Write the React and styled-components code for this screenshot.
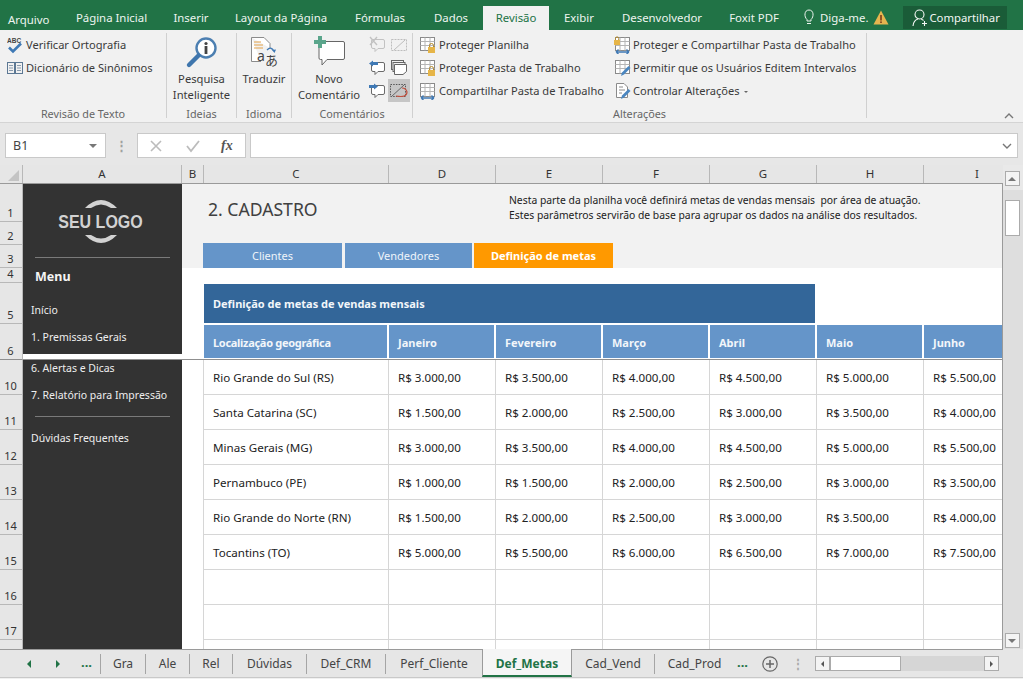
import React from "react";
import styled, { createGlobalStyle } from "styled-components";

const UI = `"Noto Sans", "Open Sans", "Liberation Sans", sans-serif`;

const Global = createGlobalStyle`
  html, body { margin: 0; padding: 0; background: #fff; }
  * { box-sizing: border-box; }
`;

const Page = styled.div`
  width: 1023px; height: 679px; overflow: hidden;
  display: flex; flex-direction: column;
  font-family: ${UI}; font-size: 12px; color: #333; background: #f0f0f0;
`;

/* ---------- title tabs ---------- */
const TopBar = styled.div`
  height: 30px; flex: none; display: flex; align-items: flex-end;
  background: #217346; color: #eef5f0;
`;
const TopTab = styled.div`
  width: ${p => p.$w}px; height: 24px; display: flex; align-items: center;
  justify-content: ${p => (p.$left ? "flex-start" : "center")};
  padding-left: ${p => (p.$left ? "8px" : "0")};
  padding-top: ${p => (p.$left ? "2px" : "0")};
  padding-bottom: ${p => (p.$left ? "0" : "1px")};
  font-size: 11.4px;
  background: ${p => (p.$active ? "#f1f1f1" : "transparent")};
  color: ${p => (p.$active ? "#217346" : "inherit")};
`;
const TellMe = styled.div`
  display: flex; align-items: center; height: 24px; margin-left: 10px; gap: 5px;
  font-size: 11.4px; padding-bottom: 1px;
`;
const ShareBtn = styled.div`
  margin: 0 0 1px 14px; width: 104px; height: 23px; background: #1a5c38;
  display: flex; align-items: center; gap: 0; padding-left: 9px; font-size: 11.3px; color: #f3f7f4;
`;

/* ---------- ribbon ---------- */
const Ribbon = styled.div`
  height: 93px; flex: none; display: flex; background: #f1f1f1; border-bottom: 1px solid #d4d4d4; padding-top: 3px;
`;
const Group = styled.div`
  width: ${p => p.$w}px; height: 85px; display: flex; flex-direction: column;
  border-right: 1px solid #d0d0d0;
`;
const GroupBody = styled.div`
  flex: 1; min-height: 0; display: flex; padding-left: ${p => p.$pl || 0}px;
`;
const GroupLabel = styled.div`
  height: 16px; margin-bottom: -4px; line-height: 16px; text-align: center; font-size: 10.8px; color: #666;
`;
const Stack = styled.div`
  width: ${p => (p.$w ? p.$w + "px" : "auto")}; display: flex; flex-direction: column;
`;
const SmallItem = styled.div`
  height: 23px; display: flex; align-items: center; gap: ${p => p.$gap ?? 3}px; font-size: 11.1px; color: #3a3a3a; white-space: nowrap;
  svg { flex: none; }
`;
const LargeBtn = styled.div`
  width: ${p => p.$w}px; flex: none; display: flex; flex-direction: column; align-items: center;
  padding-top: 3px; font-size: 11.2px; line-height: 16px; color: #3a3a3a; text-align: center;
  svg { flex: none; margin-bottom: 2px; }
`;
const MiniGrid = styled.div`
  display: grid; grid-template-columns: 22px 22px; grid-auto-rows: 23px;
`;
const MiniCell = styled.div`
  display: flex; align-items: center; justify-content: center;
  background: ${p => (p.$on ? "#c6c6c6" : "transparent")};
`;
const Caret = styled.span`
  display: inline-block; width: 0; height: 0; margin: 0 0 2px 4px; border: 2.5px solid transparent;
  border-top-color: #666; border-bottom: 0;
`;
const Collapse = styled.div`
  margin-left: auto; align-self: flex-end; margin-right: 9px; margin-bottom: 3px; line-height: 0;
`;

/* ---------- formula bar ---------- */
const FormulaBar = styled.div`
  height: 42px; flex: none; display: flex; background: #e7e7e7; padding: 10px 5px 7px;
`;
const NameBox = styled.div`
  width: 101px; background: #fff; border: 1px solid #c9c9c9; display: flex; align-items: center;
  justify-content: space-between; padding: 0 8px 0 7px; font-size: 12.5px; color: #444;
`;
const Dots = styled.div`
  width: 31px; display: flex; align-items: center; justify-content: center;
  color: #a0a0a0; font-size: 13px; font-weight: 700; line-height: 1;
`;
const FxBox = styled.div`
  width: 109px; background: #fff; border: 1px solid #c9c9c9; display: flex; align-items: center; padding: 0 0 0 10px;
  svg { flex: none; }
`;
const FxText = styled.span`
  margin-left: 20px; font-family: "Liberation Serif", serif; font-style: italic; font-weight: 700; font-size: 14px; color: #555;
`;
const FormulaInput = styled.div`
  flex: 1; margin-left: 4px; background: #fff; border: 1px solid #c9c9c9; display: flex; align-items: center;
  justify-content: flex-end; padding-right: 5px;
`;

/* ---------- sheet frame ---------- */
const Body = styled.div`
  flex: none; height: 484px; display: flex;
`;
const SheetColumn = styled.div`
  width: 1003px; flex: none; display: flex; flex-direction: column;
`;
const ColHeaders = styled.div`
  height: 19px; flex: none; display: flex; background: #e6e6e6; border-bottom: 1px solid #9a9a9a; overflow: hidden;
`;
const Corner = styled.div`
  width: 23px; flex: none; border-right: 1px solid #b8b8b8; display: flex; align-items: flex-end; justify-content: flex-end; padding: 0 3px 2px 0;
`;
const ColHead = styled.div`
  width: ${p => p.$w}px; flex: none; text-align: center; line-height: 18px; font-size: 11.5px; color: #333;
  border-right: 1px solid #b8b8b8;
`;
const SheetArea = styled.div`
  flex: 1; min-height: 0; display: flex;
`;
const RowHeaders = styled.div`
  width: 23px; flex: none; display: flex; flex-direction: column; background: #e6e6e6; overflow: hidden;
`;
const RowHead = styled.div`
  height: ${p => p.$h}px; flex: none; display: flex; align-items: flex-end; justify-content: center;
  width: 23px; padding-right: 1px;
  border-bottom: 1px solid ${p => (p.$freeze ? "#8f8f8f" : "#b8b8b8")};
  border-right: 1px solid #b8b8b8;
  font-size: 11px; line-height: 17px; color: #333;
`;
const Canvas = styled.div`
  flex: 1; min-width: 0; display: flex; flex-direction: column; background: #fff;
  border-right: 1px solid #9a9a9a; overflow: hidden;
`;
const TopPane = styled.div`
  height: 176px; flex: none; display: flex; border-bottom: 1px solid #8f8f8f;
`;
const LowerPane = styled.div`
  flex: 1; min-height: 0; display: flex;
`;

/* ---------- dark side menu ---------- */
const Sidebar = styled.div`
  width: 159px; flex: none; background: #333333; color: #f0f0f0;
  height: ${p => (p.$h ? p.$h + "px" : "auto")};
  padding-top: ${p => p.$pt || 0}px; overflow: hidden;
`;
const Logo = styled.div`
  display: flex; flex-direction: column; align-items: center; padding-right: 4px;
  svg { display: block; }
`;
const LogoText = styled.div`
  font-family: "Liberation Sans", sans-serif; font-weight: 700; font-size: 18px; line-height: 20px;
  color: #d2d2d2; margin: 4px 0 3px; white-space: nowrap; transform: scaleX(0.89);
`;
const SideRule = styled.div`
  height: 1px; background: #7a7a7a; margin: ${p => p.$mt}px 12px ${p => p.$mb}px;
`;
const MenuTitle = styled.div`
  padding-left: 12px; font-weight: 700; font-size: 12.5px; line-height: 16px; color: #f4f4f4; margin-bottom: 17px;
`;
const MenuItem = styled.div`
  padding-left: 8px; font-size: 10.5px; line-height: 16px; margin-bottom: ${p => p.$mb ?? 11}px; color: #eeeeee; white-space: nowrap;
`;

/* ---------- header band ---------- */
const MainPane = styled.div`
  flex: 1; min-width: 0; display: flex; flex-direction: column;
`;
const Band = styled.div`
  height: 84px; flex: none; background: #f2f2f2; display: flex; flex-direction: column;
`;
const BandTop = styled.div`
  height: 59px; flex: none; display: flex; padding-left: 26px;
`;
const PageTitle = styled.div`
  width: 301px; flex: none; font-size: 17.6px; color: #404040; line-height: 24px; padding-top: 13px;
`;
const Description = styled.div`
  padding-top: 9px; font-size: 10.35px; line-height: 15px; color: #222; white-space: pre;
`;
const SubTabs = styled.div`
  height: 25px; flex: none; display: flex; padding-left: 21px;
`;
const SubTab = styled.div`
  width: ${p => p.$w}px; margin-right: ${p => p.$mr || 0}px; display: flex; align-items: center; justify-content: center;
  background: ${p => (p.$active ? "#ff9900" : "#6595c9")}; color: ${p => (p.$active ? "#fff" : "#eef4fa")};
  font-size: 11px; font-weight: ${p => (p.$active ? 700 : 400)};
`;
const TableTitle = styled.div`
  width: 611px; height: 39px; flex: none; margin: 16px 0 2px 22px; background: #336699; color: #f2f6fa;
  display: flex; align-items: center; padding-left: 9px; font-size: 11px; font-weight: 700;
`;
const HeadRow = styled.div`
  display: grid; grid-template-columns: 185px repeat(6, 107px); margin-left: 21px;
`;
const HeadCell = styled.div`
  height: 33px; margin: 0 1px; background: #6595c9; color: #f2f6fa; display: flex; align-items: center;
  padding: 1px 0 0 9px; font-size: 11px; font-weight: 700; white-space: nowrap;
  letter-spacing: ${p => p.$ls || 0}px;
`;

/* ---------- data table ---------- */
const Spacer = styled.div`
  width: 21px; flex: none;
`;
const DataGrid = styled.div`
  display: grid; grid-template-columns: 185px repeat(6, 107px); grid-auto-rows: 35px; align-content: start;
`;
const DataCell = styled.div`
  border-left: 1px solid #d6d6d6; border-bottom: 1px solid #d6d6d6; display: flex; align-items: center;
  padding-left: 9px; font-size: 11.6px; color: #222; white-space: nowrap; overflow: hidden;
`;

/* ---------- scrollbars ---------- */
const VScroll = styled.div`
  flex: 1; display: flex; flex-direction: column; align-items: center; background: #dedede; padding: 6px 2px 1px 0;
  position: relative;
`;
const ScrollHeadFill = styled.div`
  position: absolute; left: 0; right: 0; top: 0; height: 25px; background: #e9e9e9;
`;
const ScrollBtn = styled.div`
  position: relative; width: 15px; height: 15px; flex: none; background: #f4f4f4; border: 1px solid #ababab;
  display: flex; align-items: center; justify-content: center;
`;
const VThumb = styled.div`
  position: relative; width: 15px; height: 36px; flex: none; margin-top: 14px; background: #fff; border: 1px solid #ababab;
`;
const Arrow = styled.span`
  width: 0; height: 0; border: ${p => p.$s || 4}px solid transparent;
  ${p => `border-${p.$dir}-color: ${p.$c || "#777"}; border-${{ top: "bottom", bottom: "top", left: "right", right: "left" }[p.$dir]}-width: 0;`}
`;
const Grow = styled.div`
  flex: 1;
`;

/* ---------- sheet tabs ---------- */
const SheetBar = styled.div`
  height: 29px; flex: none; display: flex; background: #e6e6e6; border-bottom: 1px solid #c9c9c9;
`;
const SheetBarMain = styled.div`
  width: 1003px; flex: none; display: flex; align-items: stretch; border-top: 1px solid #9a9a9a;
`;
const TabNav = styled.div`
  width: 101px; flex: none; align-self: center; height: 20px; border-right: 1px solid #a5a5a5;
  display: flex; align-items: center; padding-left: 27px; gap: 25px;
`;
const NavDots = styled.span`
  font-weight: 700; color: #217346; font-size: 13px; line-height: 10px; margin-left: -4px; padding-bottom: 4px;
`;
const SheetTab = styled.div`
  width: ${p => p.$w}px; flex: none; display: flex; align-items: center; justify-content: center;
  font-size: 12px; white-space: nowrap;
  ${p => p.$active
    ? `margin-top: -1px; background: #f5f5f5; border-left: 1px solid #9a9a9a; border-right: 1px solid #9a9a9a; border-bottom: 2px solid #217346; color: #217346; font-weight: 700; padding-top: 3px;`
    : `align-self: center; height: 20px; color: #444; border-right: ${p.$plain ? "0" : "1px solid #a5a5a5"};`}
`;
const MoreDots = styled.span`
  font-weight: 700; color: #217346; font-size: 13px; line-height: 10px; margin-left: -4px; padding-bottom: 4px; align-self: center; width: 25px; text-align: center;
`;
const AddSheet = styled.div`
  align-self: center; margin-left: 7px; line-height: 0;
`;
const BarDots = styled.span`
  align-self: center; color: #aaa; font-weight: 700; font-size: 12px; width: 22px; margin-left: 9px; text-align: center; line-height: 1;
`;
const HScroll = styled.div`
  align-self: center; margin-left: 6px; width: 184px; height: 15px; display: flex; background: #d6d6d6;
`;
const HThumb = styled.div`
  width: 71px; background: #fff; border: 1px solid #ababab;
`;

/* ---------- icons ---------- */
const SpellIcon = () => (
  <svg width="16" height="18" viewBox="0 0 16 18">
    <text x="0" y="7" fontFamily="Liberation Sans, sans-serif" fontSize="6.5" fontWeight="700" fill="#444">ABC</text>
    <path d="M2 11.5 L6 15.5 L14 7.5" fill="none" stroke="#3f79b5" strokeWidth="2.6" />
  </svg>
);
const BookIcon = () => (
  <svg width="16" height="16" viewBox="0 0 16 16" fill="none" stroke="#5c7894">
    <rect x=".5" y="2.5" width="7" height="11" />
    <rect x="8.5" y="2.5" width="7" height="11" />
    <path d="M2 5.5h4M2 8h4M2 10.5h4M10 5.5h4M10 8h4M10 10.5h4" stroke="#8a9bad" />
  </svg>
);
const SearchIcon = () => (
  <svg width="34" height="33" viewBox="0 0 34 33">
    <circle cx="21" cy="12" r="9.5" fill="#fff" stroke="#4c7fb1" strokeWidth="2.4" />
    <circle cx="21" cy="7.5" r="1.6" fill="#444" />
    <rect x="19.6" y="10" width="2.8" height="8" fill="#444" />
    <path d="M13.5 19.5 L4 29" stroke="#3f76ad" strokeWidth="4.4" strokeLinecap="round" />
  </svg>
);
const TranslateIcon = () => (
  <svg width="32" height="33" viewBox="0 0 32 33">
    <path d="M3.5 1.5 H16 L22 7.5 V12 M13 25.5 H3.5 V1.5" fill="#fff" stroke="#8b8b8b" />
    <path d="M6 6h7M6 9h9M6 12h9" stroke="#e3a24a" />
    <text x="9" y="25" fontFamily="Noto Sans, sans-serif" fontSize="14" fill="#444">a</text>
    <text x="17" y="29" fontFamily="Noto Sans CJK JP, sans-serif" fontSize="13" fill="#444">あ</text>
    <path d="M19 14 Q23 10 26 15" fill="none" stroke="#3f79b5" strokeWidth="1.3" />
    <path d="M24 14 L26.5 17 L28 13.5" fill="#3f79b5" />
  </svg>
);
const NewCommentIcon = () => (
  <svg width="34" height="33" viewBox="0 0 34 33">
    <path d="M8.5 5.5 H31 Q32.5 5.5 32.5 7 V22 Q32.5 23.5 31 23.5 H15 L10 29 V23.5 H8.5 Q7 23.5 7 22 V7 Q7 5.5 8.5 5.5 Z" fill="#fff" stroke="#666" strokeLinejoin="round" />
    <path d="M6 0 H10 V4 H14 V8 H10 V12 H6 V8 H2 V4 H6 Z" fill="#5aa58b" />
  </svg>
);
const Bubble = ({ faded, arrow, cross }) => (
  <svg width="17" height="17" viewBox="0 0 17 17">
    <path d="M4 3.5 H14 Q15.5 3.5 15.5 5 V11 Q15.5 12.5 14 12.5 H9 L6 15.5 V12.5 H4 Q2.5 12.5 2.5 11 V5 Q2.5 3.5 4 3.5 Z" fill={faded ? "none" : "#fff"} stroke={faded ? "#c2c2c2" : "#6a6a6a"} />
    {arrow === "left" && <path d="M0 4.5 L4 1.5 V3 H9 V6 H4 V7.5 Z" fill="#3f79b5" />}
    {arrow === "right" && <path d="M9 4.5 L5 1.5 V3 H0 V6 H5 V7.5 Z" fill="#3f79b5" />}
    {cross && <path d="M1 1 L8 9 M8 1 L1 9" stroke="#c2c2c2" strokeWidth="1.4" />}
  </svg>
);
const EditNote = () => (
  <svg width="17" height="14" viewBox="0 0 17 14" fill="none" stroke="#bdbdbd">
    <rect x=".5" y="1.5" width="15" height="11" strokeDasharray="2 1" />
    <path d="M3 12 L14 2" />
  </svg>
);
const AllNotes = () => (
  <svg width="16" height="16" viewBox="0 0 16 16" fill="#f1f1f1" stroke="#666">
    <rect x=".5" y=".5" width="12" height="9" />
    <rect x="2" y="2.5" width="12" height="9" />
    <path d="M3.5 4.5 H15.5 V11.5 L12 14.5 H3.5 Z" fill="#fff" />
  </svg>
);
const InkNote = () => (
  <svg width="18" height="16" viewBox="0 0 18 16" fill="none">
    <rect x=".5" y="1.5" width="15" height="12" stroke="#555" strokeDasharray="1.5 1.2" />
    <path d="M1 14 L14 2" stroke="#666" />
    <path d="M6 13 Q17 15 17 9 Q16 5 12 5" stroke="#c0503f" strokeWidth="1.2" />
  </svg>
);
const SheetIcon = ({ lock, share, pen, top, doc }) => (
  <svg width="17" height="18" viewBox="0 0 17 18" fill="none">
    {doc ? (
      <path d="M2.5 1.5 H10 L13.5 5 V15.5 H2.5 Z M5 5h4M5 8h6M5 11h3" stroke="#8a8a8a" fill="#fff" />
    ) : (
      <>
        <rect x="1.5" y="1.5" width="14" height="13" fill="#fff" stroke="#8a8a8a" />
        <path d="M1.5 5.5h14M1.5 9.5h14M6 1.5v13M11 1.5v13" stroke="#b5b5b5" />
      </>
    )}
    {lock && (
      <>
        <path d="M10.5 11 V9.5 a2 2 0 0 1 4 0 V11" stroke="#b58a2c" />
        <rect x="9" y="11" width="7" height="6" fill="#e6b548" />
      </>
    )}
    {top && (
      <>
        <path d="M1.5 4 V2.5 a1.6 1.6 0 0 1 3.2 0 V4" stroke="#b58a2c" />
        <rect x="0" y="4" width="6" height="5" fill="#e6b548" />
      </>
    )}
    {share && <path d="M2 16 H15 M2 16 L4.5 13.5 M2 16 L4.5 18 M15 16 L12.5 13.5 M15 16 L12.5 18" stroke="#3f79b5" strokeWidth="1.4" />}
    {pen && <path d="M7 17 L8 13.5 L14.5 7 L16.5 9 L10 15.5 Z" fill="#4a86c0" />}
  </svg>
);
const Lamp = () => (
  <svg width="12" height="17" viewBox="0 0 12 17" fill="none" stroke="#eef5f0">
    <path d="M4 10.5 C1 8 1 1 6 1 C11 1 11 8 8 10.5 V12 H4 Z" />
    <path d="M4 14.5h4" />
  </svg>
);
const Warn = () => (
  <svg width="16" height="15" viewBox="0 0 16 15">
    <path d="M8 .5 L15.5 14.5 H.5 Z" fill="#e6b54f" />
    <rect x="7.2" y="5" width="1.6" height="5.5" fill="#7a3b1c" />
    <rect x="7.2" y="11.4" width="1.6" height="1.6" fill="#7a3b1c" />
  </svg>
);
const ShareUser = () => (
  <svg width="17" height="18" viewBox="0 0 17 18" fill="none" stroke="#f3f7f4" strokeWidth="1.1">
    <circle cx="7.5" cy="5.5" r="4.5" />
    <path d="M1 17 C1.5 12 4 10.5 6 10 M9 10 C10 10.3 11 11 11.5 11.5" />
    <path d="M12.5 12v5M10 14.5h5" />
  </svg>
);
const CloseMark = () => (
  <svg width="16" height="14" viewBox="0 0 16 14" stroke="#bcbcbc" strokeWidth="1.6" fill="none">
    <path d="M3 2 L13 12 M13 2 L3 12" />
  </svg>
);
const CheckMark = () => (
  <svg width="16" height="14" viewBox="0 0 16 14" stroke="#bcbcbc" strokeWidth="1.8" fill="none" style={{ marginLeft: 21 }}>
    <path d="M2 7 L6 12 L14 2" />
  </svg>
);
const Chevron = ({ up }) => (
  <svg width="10" height="6" viewBox="0 0 10 6" fill="none" stroke="#777" strokeWidth="1.4">
    <path d={up ? "M1 5 L5 1 L9 5" : "M1 1 L5 5 L9 1"} />
  </svg>
);
const Arc = ({ flip }) => (
  <svg width="32" height="11" viewBox="0 0 32 11" style={flip ? { transform: "scaleY(-1)" } : undefined}>
    <path d="M0 11 Q16 -5 32 11 L26 11 Q16 4 6 11 Z" fill="#d2d2d2" />
  </svg>
);
const PlusCircle = () => (
  <svg width="16" height="16" viewBox="0 0 16 16" fill="none" stroke="#666" strokeWidth="1.2">
    <circle cx="8" cy="8" r="7.2" />
    <path d="M8 4v8M4 8h8" strokeWidth="1.5" />
  </svg>
);
const CornerMark = () => (
  <svg width="11" height="11" viewBox="0 0 11 11"><path d="M11 0 V11 H0 Z" fill="#c4c4c4" /></svg>
);

/* ---------- data ---------- */
const topTabs = [
  ["Arquivo", 62, true], ["Página Inicial", 99], ["Inserir", 60], ["Layout da Página", 120],
  ["Fórmulas", 78], ["Dados", 64], ["Revisão", 66, false, true], ["Exibir", 60], ["Desenvolvedor", 106], ["Foxit PDF", 78],
];
const cols = [["A", 159], ["B", 22], ["C", 185], ["D", 107], ["E", 107], ["F", 107], ["G", 107], ["H", 107], ["I", 107]];
const rowHeads = [
  ["1", 38], ["2", 23], ["3", 23], ["4", 15], ["5", 41], ["6", 36, true], ["10", 35], ["11", 35], ["12", 35],
  ["13", 35], ["14", 35], ["15", 35], ["16", 35], ["17", 35], ["", 35],
];
const months = ["Janeiro", "Fevereiro", "Março", "Abril", "Maio", "Junho"];
const brl = v => "R$ " + v.toLocaleString("pt-BR", { minimumFractionDigits: 2 });
const places = [
  ["Rio Grande do Sul (RS)", 3000], ["Santa Catarina (SC)", 1500], ["Minas Gerais (MG)", 3000],
  ["Pernambuco (PE)", 1000], ["Rio Grande do Norte (RN)", 1500], ["Tocantins (TO)", 5000],
];
const sheets = [
  ["Gra", 45], ["Ale", 44], ["Rel", 43], ["Dúvidas", 74], ["Def_CRM", 79], ["Perf_Cliente", 96, false, true],
  ["Def_Metas", 90, true], ["Cad_Vend", 83],
];

export default function App() {
  return (
    <Page>
      <Global />
      <TopBar>
        {topTabs.map(([t, w, left, active]) => (
          <TopTab key={t} $w={w} $left={left} $active={active}>{t}</TopTab>
        ))}
        <TellMe><Lamp />Diga-me.<Warn /></TellMe>
        <ShareBtn><ShareUser />Compartilhar</ShareBtn>
      </TopBar>

      <Ribbon>
        <Group $w={167}>
          <GroupBody $pl={7}>
            <Stack>
              <SmallItem><SpellIcon />Verificar Ortografia</SmallItem>
              <SmallItem><BookIcon />Dicionário de Sinônimos</SmallItem>
            </Stack>
          </GroupBody>
          <GroupLabel>Revisão de Texto</GroupLabel>
        </Group>
        <Group $w={70}>
          <GroupBody>
            <LargeBtn $w={69}><SearchIcon />Pesquisa<br />Inteligente</LargeBtn>
          </GroupBody>
          <GroupLabel>Ideias</GroupLabel>
        </Group>
        <Group $w={55}>
          <GroupBody>
            <LargeBtn $w={54}><TranslateIcon />Traduzir</LargeBtn>
          </GroupBody>
          <GroupLabel>Idioma</GroupLabel>
        </Group>
        <Group $w={121}>
          <GroupBody>
            <LargeBtn $w={74}><NewCommentIcon />Novo<br />Comentário</LargeBtn>
            <MiniGrid>
              <MiniCell><Bubble faded cross /></MiniCell>
              <MiniCell><EditNote /></MiniCell>
              <MiniCell><Bubble arrow="left" /></MiniCell>
              <MiniCell><AllNotes /></MiniCell>
              <MiniCell><Bubble arrow="right" /></MiniCell>
              <MiniCell $on><InkNote /></MiniCell>
            </MiniGrid>
          </GroupBody>
          <GroupLabel>Comentários</GroupLabel>
        </Group>
        <Group $w={454}>
          <GroupBody $pl={6}>
            <Stack $w={195}>
              <SmallItem><SheetIcon lock />Proteger Planilha</SmallItem>
              <SmallItem><SheetIcon lock />Proteger Pasta de Trabalho</SmallItem>
              <SmallItem><SheetIcon share />Compartilhar Pasta de Trabalho</SmallItem>
            </Stack>
            <Stack>
              <SmallItem $gap={2}><SheetIcon top share />Proteger e Compartilhar Pasta de Trabalho</SmallItem>
              <SmallItem $gap={2}><SheetIcon pen />Permitir que os Usuários Editem Intervalos</SmallItem>
              <SmallItem $gap={2}><SheetIcon doc pen /><span>Controlar Alterações<Caret /></span></SmallItem>
            </Stack>
          </GroupBody>
          <GroupLabel>Alterações</GroupLabel>
        </Group>
        <Collapse><Chevron up /></Collapse>
      </Ribbon>

      <FormulaBar>
        <NameBox>B1<Arrow $dir="top" $s={4} /></NameBox>
        <Dots>⋮</Dots>
        <FxBox><CloseMark /><CheckMark /><FxText>fx</FxText></FxBox>
        <FormulaInput><Chevron /></FormulaInput>
      </FormulaBar>

      <Body>
        <SheetColumn>
          <ColHeaders>
            <Corner><CornerMark /></Corner>
            {cols.map(([c, w]) => <ColHead key={c} $w={w}>{c}</ColHead>)}
          </ColHeaders>
          <SheetArea>
            <RowHeaders>
              {rowHeads.map(([n, h, freeze], i) => <RowHead key={i} $h={h} $freeze={freeze}>{n}</RowHead>)}
            </RowHeaders>
            <Canvas>
              <TopPane>
                <Sidebar $h={170} $pt={13}>
                  <Logo>
                    <Arc />
                    <LogoText>SEU LOGO</LogoText>
                    <Arc flip />
                  </Logo>
                  <SideRule $mt={11} $mb={11} />
                  <MenuTitle>Menu</MenuTitle>
                  <MenuItem>Início</MenuItem>
                  <MenuItem>1. Premissas Gerais</MenuItem>
                </Sidebar>
                <MainPane>
                  <Band>
                    <BandTop>
                      <PageTitle>2. CADASTRO</PageTitle>
                      <Description>
                        Nesta parte da planilha você definirá metas de vendas mensais  por área de atuação.<br />
                        Estes parâmetros servirão de base para agrupar os dados na análise dos resultados.
                      </Description>
                    </BandTop>
                    <SubTabs>
                      <SubTab $w={139} $mr={3}>Clientes</SubTab>
                      <SubTab $w={127} $mr={2}>Vendedores</SubTab>
                      <SubTab $w={139} $active>Definição de metas</SubTab>
                    </SubTabs>
                  </Band>
                  <TableTitle>Definição de metas de vendas mensais</TableTitle>
                  <HeadRow>
                    <HeadCell $ls={-0.3}>Localização geográfica</HeadCell>
                    {months.map(m => <HeadCell key={m}>{m}</HeadCell>)}
                  </HeadRow>
                </MainPane>
              </TopPane>
              <LowerPane>
                <Sidebar>
                  <MenuItem>6. Alertas e Dicas</MenuItem>
                  <MenuItem $mb={0}>7. Relatório para Impressão</MenuItem>
                  <SideRule $mt={13} $mb={13} />
                  <MenuItem>Dúvidas Frequentes</MenuItem>
                </Sidebar>
                <Spacer />
                <DataGrid>
                  {places.map(([name, base]) => (
                    <React.Fragment key={name}>
                      <DataCell>{name}</DataCell>
                      {months.map((m, i) => <DataCell key={m}>{brl(base + i * 500)}</DataCell>)}
                    </React.Fragment>
                  ))}
                  {Array.from({ length: 21 }, (_, i) => <DataCell key={i} />)}
                </DataGrid>
              </LowerPane>
            </Canvas>
          </SheetArea>
        </SheetColumn>
        <VScroll>
          <ScrollHeadFill />
          <ScrollBtn><Arrow $dir="bottom" /></ScrollBtn>
          <VThumb />
          <Grow />
          <ScrollBtn><Arrow $dir="top" /></ScrollBtn>
        </VScroll>
      </Body>

      <SheetBar>
        <SheetBarMain>
          <TabNav>
            <Arrow $dir="right" $c="#217346" />
            <Arrow $dir="left" $c="#217346" />
            <NavDots>...</NavDots>
          </TabNav>
          {sheets.map(([s, w, active, plain]) => (
            <SheetTab key={s} $w={w} $active={active} $plain={plain}>{s}</SheetTab>
          ))}
          <SheetTab $w={79} $plain>Cad_Prod</SheetTab>
          <MoreDots>...</MoreDots>
          <AddSheet><PlusCircle /></AddSheet>
          <BarDots>⋮</BarDots>
          <HScroll>
            <ScrollBtn><Arrow $dir="right" $s={3} $c="#555" /></ScrollBtn>
            <HThumb />
            <Grow />
            <ScrollBtn><Arrow $dir="left" $s={3} $c="#555" /></ScrollBtn>
          </HScroll>
        </SheetBarMain>
      </SheetBar>
    </Page>
  );
}
